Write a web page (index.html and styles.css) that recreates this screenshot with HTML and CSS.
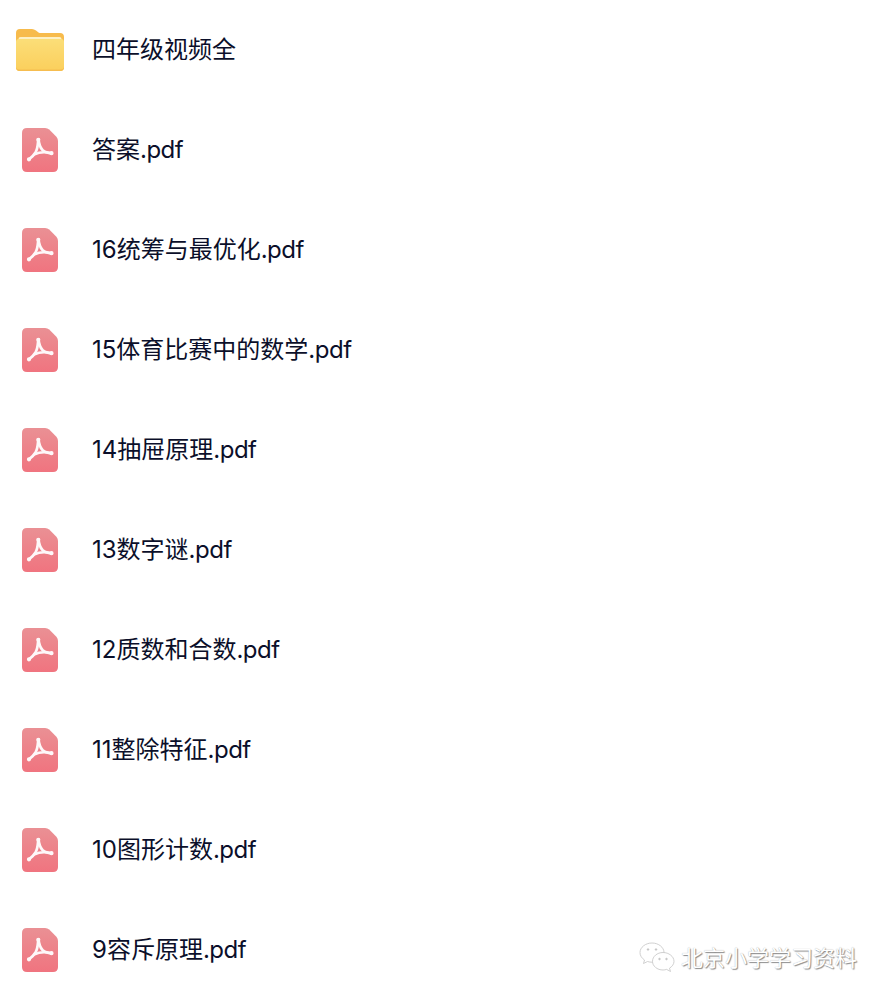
FILE: index.html
```html
<!DOCTYPE html>
<html>
<head>
<meta name="viewport" content="width=device-width, initial-scale=1">
<link rel="stylesheet" href="styles.css">
</head>
<body>

<svg class="defs" width="0" height="0">
  <defs>
    <linearGradient id="pdfFill" x1="0" y1="0" x2="0" y2="1">
      <stop offset="0" stop-color="#ea9094"/>
      <stop offset="1" stop-color="#f0747f"/>
    </linearGradient>
    <linearGradient id="folderFront" x1="0" y1="0" x2="0" y2="1">
      <stop offset="0" stop-color="#fbde78"/>
      <stop offset="1" stop-color="#fbcf5c"/>
    </linearGradient>
    <symbol id="pdfIcon" viewBox="0 0 36 44">
      <path d="M5 0H23Q25.500 0 27.200 1.600L34.400 8.800Q36 10.500 36 13V39Q36 44 31 44H5Q0 44 0 39V5Q0 0 5 0Z" fill="url(#pdfFill)"/>
      <g fill="none" stroke="#fff" stroke-width="2.700" stroke-linecap="round" opacity="0.95">
        <path d="M16.300 11.500C15.800 16 16 20 13.500 24.500C12 27 9.500 29.500 6.800 31.500"/>
        <path d="M16.500 11.500C17 16 18 19.500 20.500 22C23 24.300 26.500 25 29.500 25"/>
        <path d="M12.500 26.500C16 24.700 19 24.300 22 24.300C24.500 24.300 27 24.800 29.500 25.500" stroke-width="2.400"/>
        <circle cx="16.300" cy="11.800" r="1.200" fill="#fff" stroke-width="1.800"/>
        <circle cx="7" cy="31.300" r="1.200" fill="#fff" stroke-width="1.800"/>
        <circle cx="29.500" cy="25.200" r="1.200" fill="#fff" stroke-width="1.800"/>
      </g>
    </symbol>
  </defs>
</svg>

<ul class="file-list">
  <li class="file-row">
    <span class="file-icon">
      <svg width="48" height="42" viewBox="0 0 48 42">
        <path d="M4 0H16Q18 0 20 1.500L22.500 3.500Q23.500 4 25 4H44Q48 4 48 8V38Q48 42 44 42H4Q0 42 0 38V4Q0 0 4 0Z" fill="#f7bb4c"/>
        <rect x="2.500" y="8" width="43" height="6" rx="2" fill="#fdf0c4"/>
        <path d="M0 13Q0 10 3 10H45Q48 10 48 13V38Q48 42 44 42H4Q0 42 0 38Z" fill="url(#folderFront)"/>
        <path d="M0 37.500Q0 40.500 4 40.500H44Q48 40.500 48 37.500V38Q48 42 44 42H4Q0 42 0 38Z" fill="#f6bd50"/>
      </svg>
    </span>
    <span class="file-name">四年级视频全</span>
  </li>
  <li class="file-row">
    <span class="file-icon"><svg width="36" height="44"><use href="#pdfIcon"/></svg></span>
    <span class="file-name">答案<span class="ext">.pdf</span></span>
  </li>
  <li class="file-row">
    <span class="file-icon"><svg width="36" height="44"><use href="#pdfIcon"/></svg></span>
    <span class="file-name">16统筹与最优化<span class="ext">.pdf</span></span>
  </li>
  <li class="file-row">
    <span class="file-icon"><svg width="36" height="44"><use href="#pdfIcon"/></svg></span>
    <span class="file-name">15体育比赛中的数学<span class="ext">.pdf</span></span>
  </li>
  <li class="file-row">
    <span class="file-icon"><svg width="36" height="44"><use href="#pdfIcon"/></svg></span>
    <span class="file-name">14抽屉原理<span class="ext">.pdf</span></span>
  </li>
  <li class="file-row">
    <span class="file-icon"><svg width="36" height="44"><use href="#pdfIcon"/></svg></span>
    <span class="file-name">13数字谜<span class="ext">.pdf</span></span>
  </li>
  <li class="file-row">
    <span class="file-icon"><svg width="36" height="44"><use href="#pdfIcon"/></svg></span>
    <span class="file-name">12质数和合数<span class="ext">.pdf</span></span>
  </li>
  <li class="file-row">
    <span class="file-icon"><svg width="36" height="44"><use href="#pdfIcon"/></svg></span>
    <span class="file-name">11整除特征<span class="ext">.pdf</span></span>
  </li>
  <li class="file-row">
    <span class="file-icon"><svg width="36" height="44"><use href="#pdfIcon"/></svg></span>
    <span class="file-name">10图形计数<span class="ext">.pdf</span></span>
  </li>
  <li class="file-row">
    <span class="file-icon"><svg width="36" height="44"><use href="#pdfIcon"/></svg></span>
    <span class="file-name">9容斥原理<span class="ext">.pdf</span></span>
  </li>
</ul>

<div class="watermark">
  <svg width="36" height="32" viewBox="0 0 36 32" fill="#fff" stroke="#c4c4c4" stroke-width="0.800">
    <path d="M13 1C6.500 1 1 5.300 1 10.500C1 13.700 2.800 16.200 5.500 18L4.500 21.500L8.500 19.500C10 20 11.500 20.200 13 20.200C19.500 20.200 25 15.800 25 10.500C25 5.300 19.500 1 13 1Z"/>
    <path d="M24 10.500C18.200 10.500 13.500 14.500 13.500 19.300C13.500 24.100 18.200 28 24 28C25.300 28 26.500 27.800 27.600 27.400L31.500 29.500L30.500 26.200C33.200 24.500 35 22.100 35 19.300C35 14.500 29.800 10.500 24 10.500Z"/>
    <circle cx="9" cy="7.500" r="0.800" fill="#b5b5b5"/>
    <circle cx="17" cy="7.500" r="0.800" fill="#b5b5b5"/>
    <circle cx="20.500" cy="17" r="0.800" fill="#b5b5b5"/>
    <circle cx="27.500" cy="17" r="0.800" fill="#b5b5b5"/>
  </svg>
  <span class="watermark-text">北京小学学习资料</span>
</div>

</body>
</html>
```

FILE: styles.css
```css
* {
  box-sizing: border-box;
}

html, body {
  height: 100%;
}

body {
  margin: 0;
  background: #fff;
  position: relative;
  overflow: hidden;
  font-family: "Inter", "Noto Sans CJK SC", sans-serif;
}

.defs {
  display: block;
  height: 0;
}

/* The list of files */
.file-list {
  margin: 0;
  padding: 0;
  list-style: none;
}

.file-row {
  display: flex;
  align-items: center;
  height: 100px;
}

.file-icon {
  display: flex;
  align-items: center;
  justify-content: center;
  width: 48px;
  margin-left: 16px;
  margin-right: 28px;
}

.file-icon svg {
  display: block;
  filter: blur(0.4px);
}

.file-name {
  font-size: 24px;
  line-height: 34px;
  color: #0b0f2a;
}

.ext {
  letter-spacing: -0.5px;
}

/* Watermark in the bottom corner */
.watermark {
  position: absolute;
  right: 29px;
  bottom: 24px;
  display: flex;
  align-items: center;
  gap: 6px;
}

.watermark-text {
  font-size: 22px;
  line-height: 30px;
  color: #fff;
  text-shadow: 1px 1px 1px #8a8a8a, 0 0 1px #aaa;
}
```
